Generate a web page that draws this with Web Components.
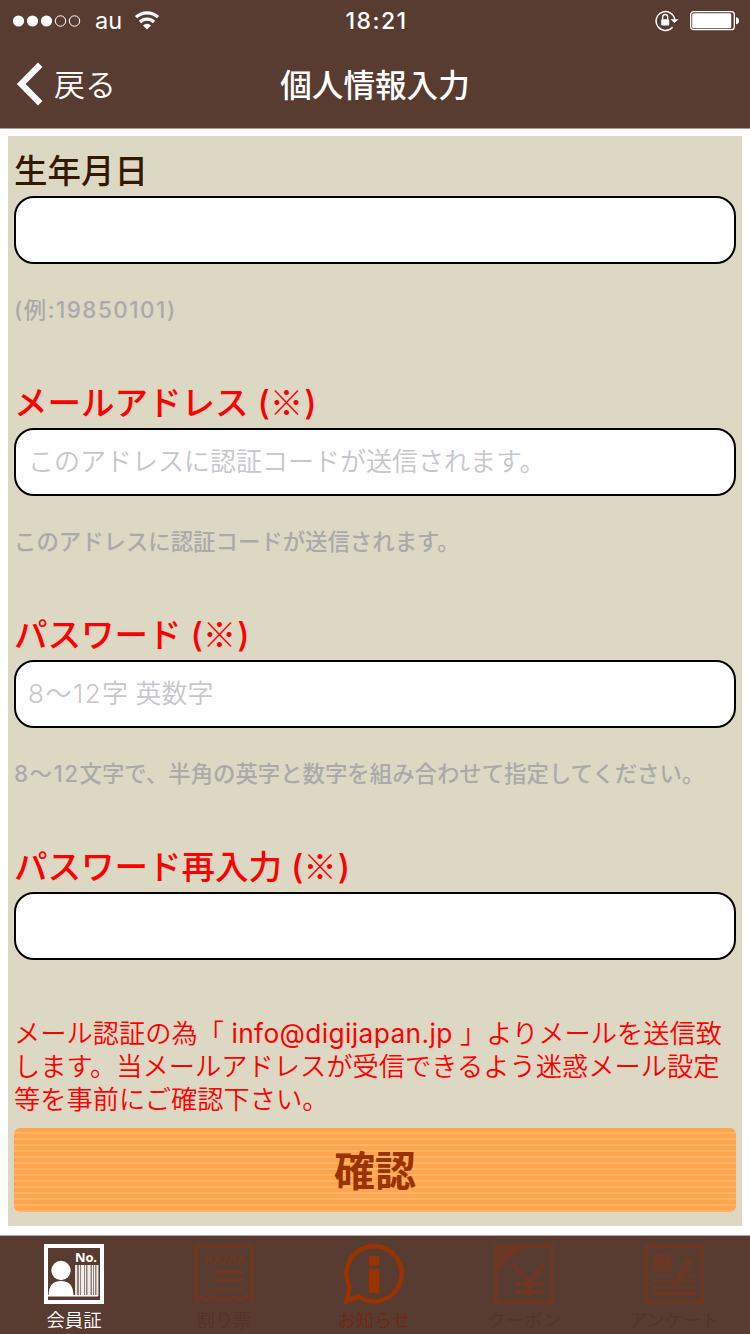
<!DOCTYPE html>
<html lang="ja">
<head>
<meta charset="utf-8">
<title>個人情報入力</title>
<style>
  body {
    margin: 0;
    background: #fff;
    font-family: Inter, "Noto Sans CJK JP", sans-serif;
  }
</style>
</head>
<body>
<app-screen></app-screen>

<script>
class StatusBar extends HTMLElement {
  constructor() {
    super();
    this.attachShadow({ mode: "open" });
  }

  connectedCallback() {
    this.shadowRoot.innerHTML = `
      <style>
        :host {
          display: grid;
          grid-template-columns: 1fr auto 1fr;
          align-items: center;
          height: 40px;
          padding: 0 11px 0 12px;
          color: #fff;
          font-size: 23px;
          line-height: 40px;
        }
        svg { display: block; }
        .left, .right { display: flex; align-items: center; }
        .right { justify-content: flex-end; gap: 11px; padding-top: 1px; }
        .carrier { margin: 0 12px 0 14px; padding-top: 1px; font-size: 23.5px; }
        .time { padding: 1px 0 0 2px; letter-spacing: 1.5px; font-weight: 500; font-size: 23px; }
      </style>

      <div class="left">
        <svg width="69" height="14" viewBox="0 0 69 14">
          <g fill="#fff">
            <circle cx="6.500" cy="7" r="5.600"/>
            <circle cx="20.500" cy="7" r="5.600"/>
            <circle cx="34.500" cy="7" r="5.600"/>
          </g>
          <g fill="none" stroke="#fff">
            <circle cx="48.500" cy="7" r="5.200"/>
            <circle cx="62.500" cy="7" r="5.200"/>
          </g>
        </svg>
        <span class="carrier">au</span>
        <svg width="26" height="20" viewBox="0 0 26 20">
          <g fill="none" stroke="#fff" stroke-width="3.2">
            <path d="M2 6.200a16 16 0 0 1 22 0"/>
            <path d="M6 11a10 10 0 0 1 14 0"/>
          </g>
          <path d="M9 14.400a6 6 0 0 1 8 0L13 18.500z" fill="#fff"/>
        </svg>
      </div>
      <span class="time">18:21</span>
      <div class="right">
        <svg width="24" height="22" viewBox="0 0 24 22">
          <path d="M17.600 17.200A9.400 9.400 0 1 1 19.800 9.500" fill="none" stroke="#fff" stroke-width="1.5"/>
          <path d="M15.500 9.200h8L19.500 13z" fill="#fff"/>
          <rect x="6.200" y="9.200" width="8" height="6.200" rx=".6" fill="#fff"/>
          <path d="M7.700 9.500V7a2.500 2.500 0 0 1 5 0v2.500" fill="none" stroke="#fff" stroke-width="1.3"/>
        </svg>
        <svg width="49" height="20" viewBox="0 0 49 20">
          <rect x=".7" y=".7" width="43.600" height="18" rx="3" fill="none" stroke="#fff" stroke-width="1.3"/>
          <rect x="2.200" y="2.200" width="39" height="15" rx="1.5" fill="#fff"/>
          <path d="M46 6.200q3 .3 3 3.500t-3 3.500z" fill="#fff"/>
        </svg>
      </div>
    `;
  }
}

class NavBar extends HTMLElement {
  constructor() {
    super();
    this.attachShadow({ mode: "open" });
  }

  connectedCallback() {
    this.shadowRoot.innerHTML = `
      <style>
        :host {
          display: grid;
          grid-template-columns: 1fr auto 1fr;
          align-items: center;
          height: 88px;
          color: #fff;
          line-height: 40px;
        }
        .back {
          display: flex;
          align-items: center;
          gap: 11px;
          padding-left: 16px;
          font-size: 31px;
          font-weight: 350;
        }
        .back span { padding-top: 2px; }
        h1 { margin: 0; padding-top: 4px; font-size: 31.6px; font-weight: 500; }
      </style>

      <div class="back">
        <svg width="27" height="44" viewBox="0 0 27 44">
          <path d="M24.200 2.800L5.200 22l19 19.200" fill="none" stroke="#fff" stroke-width="6.200"/>
        </svg>
        <span>戻る</span>
      </div>
      <h1><slot></slot></h1>
    `;
  }
}

class FormField extends HTMLElement {
  constructor() {
    super();
    this.attachShadow({ mode: "open" });
  }

  connectedCallback() {
    const placeholder = this.getAttribute("placeholder") || "";
    const mark = this.hasAttribute("required") ? ` (<span class="mark">※</span>)` : "";
    this.shadowRoot.innerHTML = `
      <style>
        :host {
          display: block;
          height: 232px;
          color: #331900;
        }
        :host([required]) { color: #f00; }
        :host([last]) { height: 177px; }
        .label {
          height: 52px;
          line-height: 54px;
          font-size: 33.5px;
          font-weight: 500;
          white-space: pre;
        }
        /* line-height 0 keeps the second font from moving the baseline */
        .mark {
          font-family: "Noto Sans CJK JP", sans-serif;
          font-weight: 400;
          letter-spacing: 1px;
          line-height: 0;
        }
        .box {
          box-sizing: border-box;
          height: 68px;
          padding: 0 12px;
          border: 2px solid #000;
          border-radius: 20px;
          background: #fff;
          color: #c7c7cd;
          font-size: 26px;
          font-weight: 350;
          line-height: 63px;
          white-space: pre;
        }
        .hint {
          margin-top: 29px;
          color: #aaa;
          font-size: 22.4px;
          font-weight: 500;
          line-height: 34px;
          white-space: nowrap;
        }
        .wide, ::slotted(.wide) { letter-spacing: 1.5px; }
      </style>

      <div class="label">${this.getAttribute("label")}${mark}</div>
      <div class="box">${placeholder.replace(/^[\d〜]+/, `<span class="wide">$&</span>`)}</div>
      <div class="hint"><slot></slot></div>
    `;
  }
}

class StripedButton extends HTMLElement {
  constructor() {
    super();
    this.attachShadow({ mode: "open" });
  }

  connectedCallback() {
    this.shadowRoot.innerHTML = `
      <style>
        :host {
          display: block;
          height: 84px;
          border-radius: 6px;
          background: repeating-linear-gradient(#ffa64d 0 4px, #ffb366 4px 6px);
          color: #930;
          font-size: 41px;
          font-weight: 700;
          line-height: 87px;
          text-align: center;
        }
      </style>
      <slot></slot>
    `;
  }
}

const icons = {
  card: `
    <path d="M2 2h56v56H2z" fill="none" stroke="currentColor" stroke-width="4"/>
    <circle cx="17" cy="26.500" r="9.700" fill="currentColor"/>
    <path d="M4.500 52q0-15 12.500-15t12.500 15z" fill="currentColor"/>
    <text x="31" y="18" font-family="Open Sans" font-size="13" font-weight="700" fill="currentColor" textLength="22">No.</text>
    <path d="M31 21h2v31h-2zM35 21h1v31h-1zM37 21h3v31h-3zM41 21h1v31h-1zM43.500 21h3v31h-3zM48 21h1v31h-1zM50 21h1v31h-1zM52.500 21h2v31h-2z" fill="currentColor" opacity=".85"/>
    <path d="M33 21h21v31H33z" fill="currentColor" opacity=".35"/>
    <path d="M4 51h50v1.500H4z" fill="currentColor"/>`,
  ticket: `
    <path d="M2 57V2h56v55l-6-4-6 4-6-4-5 4-5-4-5 4-6-4-6 4-6-4z" fill="none" stroke="currentColor" stroke-width="4"/>
    <text x="9" y="20" font-family="Open Sans" font-size="15" font-weight="700" fill="currentColor" textLength="43">XX/XX</text>
    <path d="M21 26h29v4H21zM21 34h29v4H21z" fill="currentColor"/>
    <path d="M9 46h42" stroke="currentColor" stroke-width="3" stroke-dasharray="4 2"/>`,
  info: `
    <path d="M2.800 57.300L5.700 42.700A27.500 27.500 0 1 1 14.500 52.500z" fill="none" stroke="currentColor" stroke-width="4.400"/>
    <path d="M24.700 12h10.500v9.500H24.700zM24.700 25h10.500v24H24.700z" fill="currentColor"/>`,
  coupon: `
    <path d="M2 2h56v56H2z" fill="none" stroke="currentColor" stroke-width="4"/>
    <path d="M2 2h30L2 28z" fill="currentColor"/>
    <path d="M19 21l16 17 15-17M35 36v18" fill="none" stroke="currentColor" stroke-width="5.500"/>
    <path d="M21 38h29v4H21zM21 46h29v4H21z" fill="currentColor"/>`,
  survey: `
    <path d="M2 2h56v56H2z" fill="none" stroke="currentColor" stroke-width="4"/>
    <path d="M9 10h18v17H9z" fill="currentColor"/>
    <path d="M12 18l4 5 8-8" fill="none" stroke="#593c31" stroke-width="1"/>
    <path d="M9 32h22M39 32h12M9 37h22M39 37h12" stroke="currentColor" stroke-width="2"/>
    <path d="M9 42h43v3H9zM9 48h43v4H9z" fill="currentColor"/>
    <path d="M42 13l7 5-13 22-6 4 1-8z" fill="currentColor"/>`
};

class TabItem extends HTMLElement {
  constructor() {
    super();
    this.attachShadow({ mode: "open" });
  }

  connectedCallback() {
    this.shadowRoot.innerHTML = `
      <style>
        :host {
          display: flex;
          flex: 1;
          flex-direction: column;
          align-items: center;
          padding: 8px 2px 0 0;
          color: #6b3825;
          --label: #53332a;
        }
        :host([active]) { color: #fff; --label: #fff; }
        :host([news]) { color: #930; --label: #702812; }
        svg { display: block; flex: none; }
        .label {
          color: var(--label);
          font-size: 18.4px;
          font-weight: 350;
          line-height: 32px;
          white-space: nowrap;
        }
      </style>

      <svg width="60" height="60" viewBox="0 0 60 60">${icons[this.getAttribute("icon")]}</svg>
      <div class="label"><slot></slot></div>
    `;
  }
}

class TabBar extends HTMLElement {
  constructor() {
    super();
    this.attachShadow({ mode: "open" });
  }

  connectedCallback() {
    this.shadowRoot.innerHTML = `
      <style>
        :host {
          display: flex;
          box-sizing: border-box;
          height: 99px;
          border-top: 1px solid #b0a69f;
          background: #593c31;
        }
      </style>
      <slot></slot>
    `;
  }
}

class AppScreen extends HTMLElement {
  constructor() {
    super();
    this.attachShadow({ mode: "open" });
  }

  connectedCallback() {
    this.shadowRoot.innerHTML = `
      <style>
        :host {
          display: flex;
          flex-direction: column;
          width: 750px;
          height: 1334px;
          overflow: hidden;
        }
        header {
          background: #593c31;
          border-bottom: 1px solid #a89d97;
        }
        main {
          box-sizing: border-box;
          flex: 1;
          margin: 7px 8px 9px;
          padding: 8px 6px 0;
          background: #ddd8c4;
        }
        .notice {
          margin: 0 0 12px;
          color: #f00;
          font-size: 26.25px;
          font-weight: 350;
          line-height: 33px;
          white-space: nowrap;
        }
        .mail { font-weight: 400; letter-spacing: 0.4px; }
      </style>

      <header>
        <status-bar></status-bar>
        <nav-bar>個人情報入力</nav-bar>
      </header>
      <main>
        <form-field label="生年月日"><span class="wide">(例:19850101)</span></form-field>
        <form-field required label="メールアドレス" placeholder="このアドレスに認証コードが送信されます。">このアドレスに認証コードが送信されます。</form-field>
        <form-field required label="パスワード" placeholder="8〜12字 英数字"><span class="wide">8〜12</span>文字で、半角の英字と数字を組み合わせて指定してください。</form-field>
        <form-field required last label="パスワード再入力"></form-field>
        <p class="notice">メール認証の為「 <span class="mail">info@digijapan.jp</span> 」よりメールを送信致<br>します。当メールアドレスが受信できるよう迷惑メール設定<br>等を事前にご確認下さい。</p>
        <striped-button>確認</striped-button>
      </main>
      <tab-bar>
        <tab-item icon="card" active>会員証</tab-item>
        <tab-item icon="ticket">割り票</tab-item>
        <tab-item icon="info" news>お知らせ</tab-item>
        <tab-item icon="coupon">クーポン</tab-item>
        <tab-item icon="survey">アンケート</tab-item>
      </tab-bar>
    `;
  }
}

customElements.define("status-bar", StatusBar);
customElements.define("nav-bar", NavBar);
customElements.define("form-field", FormField);
customElements.define("striped-button", StripedButton);
customElements.define("tab-item", TabItem);
customElements.define("tab-bar", TabBar);
customElements.define("app-screen", AppScreen);
</script>
</body>
</html>
